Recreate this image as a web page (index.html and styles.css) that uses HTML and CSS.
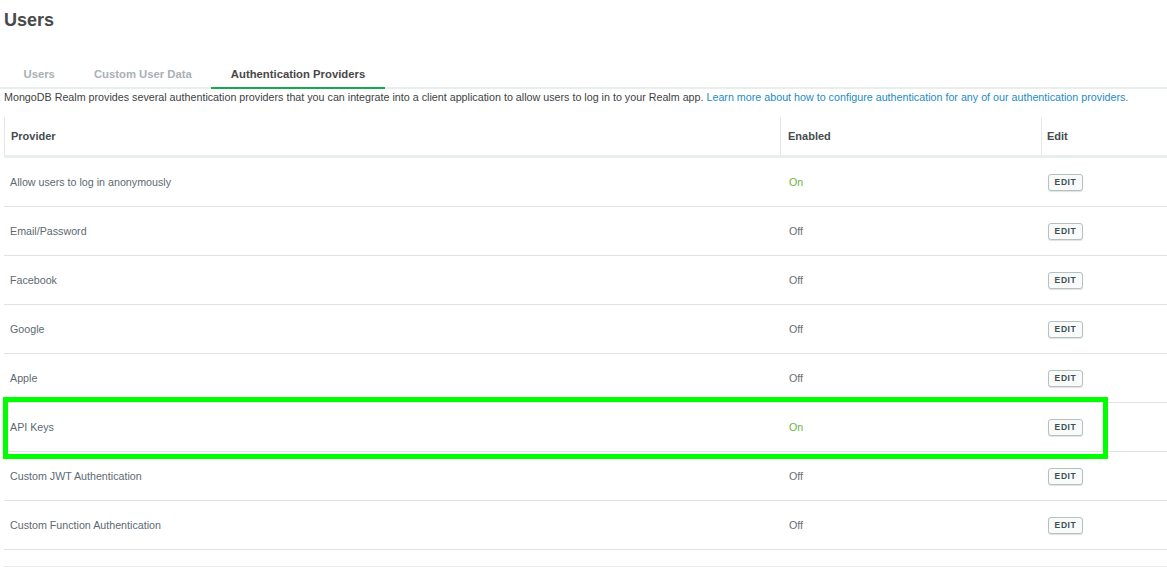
FILE: index.html
```html
<!DOCTYPE html>
<html lang="en">
<head>
<meta charset="utf-8">
<title>Users</title>
<link rel="stylesheet" href="styles.css">
</head>
<body>
<div class="page">
  <h1 class="title">Users</h1>
  <nav class="tabs">
    <span class="tab">Users</span>
    <span class="tab">Custom User Data</span>
    <span class="tab tab-active">Authentication Providers</span>
  </nav>
  <p class="desc">MongoDB Realm provides several authentication providers that you can integrate into a client application to allow users to log in to your Realm app. <a class="link" href="#">Learn more about how to configure authentication for any of our authentication providers.</a></p>

  <div class="table">
    <div class="thead">
      <div class="th">Provider</div>
      <div class="th th-mid">Enabled</div>
      <div class="th th-edit">Edit</div>
    </div>
    <div class="row">
      <div class="cell">Allow users to log in anonymously</div>
      <div class="cell cell-status on">On</div>
      <div class="cell cell-edit"><button class="edit">EDIT</button></div>
    </div>
    <div class="row">
      <div class="cell">Email/Password</div>
      <div class="cell cell-status">Off</div>
      <div class="cell cell-edit"><button class="edit">EDIT</button></div>
    </div>
    <div class="row">
      <div class="cell">Facebook</div>
      <div class="cell cell-status">Off</div>
      <div class="cell cell-edit"><button class="edit">EDIT</button></div>
    </div>
    <div class="row">
      <div class="cell">Google</div>
      <div class="cell cell-status">Off</div>
      <div class="cell cell-edit"><button class="edit">EDIT</button></div>
    </div>
    <div class="row">
      <div class="cell">Apple</div>
      <div class="cell cell-status">Off</div>
      <div class="cell cell-edit"><button class="edit">EDIT</button></div>
    </div>
    <div class="row row-highlight">
      <div class="cell">API Keys</div>
      <div class="cell cell-status on">On</div>
      <div class="cell cell-edit"><button class="edit">EDIT</button></div>
      <div class="highlight"></div>
    </div>
    <div class="row">
      <div class="cell">Custom JWT Authentication</div>
      <div class="cell cell-status">Off</div>
      <div class="cell cell-edit"><button class="edit">EDIT</button></div>
    </div>
    <div class="row">
      <div class="cell">Custom Function Authentication</div>
      <div class="cell cell-status">Off</div>
      <div class="cell cell-edit"><button class="edit">EDIT</button></div>
    </div>
    <div class="tfoot"></div>
  </div>
</div>
</body>
</html>
```

FILE: styles.css
```css
* { box-sizing: border-box; }

html, body {
  margin: 0;
  padding: 0;
  background: #ffffff;
}

body {
  font-family: "Liberation Sans", Arial, sans-serif;
  color: #5d6c74;
  overflow: hidden;
}

.page {
  padding-left: 4px;
}

.title {
  margin: 0;
  padding-top: 9px;
  font-size: 18px;
  line-height: 22px;
  font-weight: bold;
  color: #494949;
}

.tabs {
  display: flex;
  margin-top: 29px;
  margin-left: -4px;
  padding-left: 4px;
  border-bottom: 2px solid #e7eeec;
}

.tab {
  padding: 7px 19.5px 6px;
  margin-bottom: -2px;
  border-bottom: 2px solid transparent;
  font-size: 11.3px;
  line-height: 14px;
  font-weight: bold;
  color: #a9b1b4;
}

.tab-active {
  color: #494747;
  border-bottom-color: #13aa52;
}

.desc {
  margin: 1px 0 0;
  font-size: 10.72px;
  line-height: 14px;
  color: #3d4244;
  white-space: nowrap;
}

.link {
  color: #1d8cc0;
  text-decoration: none;
}

.table {
  margin-top: 13px;
}

.thead,
.row {
  display: grid;
  grid-template-columns: 776px 261px 1fr;
}

.thead {
  border-bottom: 3px solid #e7eeec;
}

.th {
  height: 38px;
  display: flex;
  align-items: center;
  padding-left: 6px;
  border-left: 1px solid #e8e8e8;
  font-size: 11px;
  font-weight: bold;
  color: #464c4f;
}

.th-mid { padding-left: 7px; }
.th-edit { padding-left: 5px; }

.row {
  position: relative;
  height: 49px;
  border-bottom: 1px solid #e2e2e2;
}

.cell {
  display: flex;
  align-items: center;
  padding-left: 6px;
  font-size: 10.7px;
  color: #5d6a72;
}

.cell-status { padding-left: 9px; color: #6a7075; }
.cell-status.on { color: #6db33f; }
.cell-edit { padding-left: 7px; }

.edit {
  width: 35px;
  height: 17px;
  padding: 0;
  border: 1px solid #b5c0c0;
  border-radius: 3px;
  background: #f9fbfa;
  box-shadow: 0 1px 1px rgba(0, 0, 0, 0.12);
  font-family: "Liberation Sans", Arial, sans-serif;
  font-size: 8.5px;
  font-weight: bold;
  letter-spacing: 0.6px;
  color: #3d4f58;
  line-height: 15px;
  cursor: pointer;
}

.tfoot {
  height: 17px;
  border-bottom: 1px solid #ececec;
}

.highlight {
  position: absolute;
  left: -1px;
  top: -6px;
  width: 1105px;
  height: 62px;
  border: 5px solid #00ff00;
  pointer-events: none;
}
```
